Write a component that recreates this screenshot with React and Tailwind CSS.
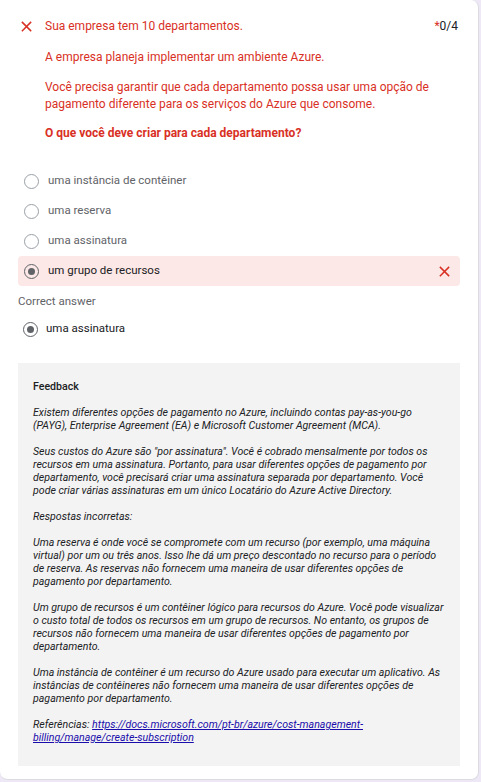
import React from "react";

function XIcon({ className = "" }) {
  return (
    <svg viewBox="0 0 12 12" className={className} fill="none" stroke="currentColor" strokeWidth="1.6" strokeLinecap="square">
      <path d="M1.5 1.5 L10.5 10.5 M10.5 1.5 L1.5 10.5" />
    </svg>
  );
}

function Radio({ checked, dark }) {
  return (
    <span
      className={
        "flex h-[15px] w-[15px] shrink-0 items-center justify-center rounded-full border-[1.5px] " +
        (checked || dark ? "border-[#5f6368]" : "border-[#9aa0a6]")
      }
    >
      {checked && <span className="h-[7px] w-[7px] rounded-full bg-[#5f6368]" />}
    </span>
  );
}

export default function App() {
  const options = [
    { label: "uma instância de contêiner" },
    { label: "uma reserva" },
    { label: "uma assinatura" },
    { label: "um grupo de recursos", selected: true },
  ];
  return (
    <div
      className="min-h-[782px] bg-[#ede7f6] text-[11.5px]"
      style={{ fontFamily: "Roboto, 'Liberation Sans', sans-serif" }}
    >
      <div className="h-[780px] w-[479px] rounded-b-lg rounded-tr-lg border-r border-b border-[#dadce0] bg-white pl-[18px] pr-[18px] pt-[18px]">
        {/* Question */}
        <div className="flex">
          <div className="w-[27px] shrink-0 pl-[3px] pt-[3px]">
            <XIcon className="h-[11px] w-[11px] text-[#d93025]" />
          </div>
          <div className="flex-1 text-[12px] leading-[17px] text-[#d93025]">
            <div className="flex justify-between">
              <p>Sua empresa tem 10 departamentos.</p>
              <span className="pr-[2px] text-[#202124]">
                <span className="text-[#d93025]">*</span>0/4
              </span>
            </div>
            <p className="mt-[14px]">A empresa planeja implementar um ambiente Azure.</p>
            <p className="mt-[13px] pr-[20px]">
              Você precisa garantir que cada departamento possa usar uma opção de pagamento diferente para os serviços do Azure que consome.
            </p>
            <p className="mt-[12px] font-bold">O que você deve criar para cada departamento?</p>
          </div>
        </div>

        {/* Options */}
        <div className="mt-[24px] w-[442px]">
          {options.map((o) => (
            <div
              key={o.label}
              className={
                "flex h-[30px] items-center rounded-[4px] pl-[6px] pr-[10px] " +
                (o.selected ? "bg-[#fce8e6]" : "")
              }
            >
              <Radio checked={o.selected} />
              <span className={"ml-[9px] flex-1 " + (o.selected ? "text-[#202124]" : "text-[#5f6368]")}>{o.label}</span>
              {o.selected && <XIcon className="h-[11px] w-[11px] text-[#d93025]" />}
            </div>
          ))}
        </div>

        <div className="mt-[8px] leading-[15px] text-[#5f6368]">Correct answer</div>
        <div className="mt-[5px] flex h-[30px] items-center pl-[5px]">
          <Radio checked />
          <span className="ml-[8px] text-[#202124]">uma assinatura</span>
        </div>

        {/* Feedback */}
        <div className="mt-[19px] h-[403px] w-[442px] bg-[#f3f3f3] pl-[15px] pr-[14px] pt-[17px] text-[10.6px] leading-[13px] text-[#202124]">
          <div className="font-medium">Feedback</div>
          <div className="mt-[13px] italic">
            <p>
              Existem diferentes opções de pagamento no Azure, incluindo contas pay-as-you-go (PAYG), Enterprise Agreement (EA) e Microsoft Customer Agreement (MCA).
            </p>
            <p className="mt-[13px]">
              Seus custos do Azure são "por assinatura". Você é cobrado mensalmente por todos os recursos em uma assinatura. Portanto, para usar diferentes opções de pagamento por departamento, você precisará criar uma assinatura separada por departamento. Você pode criar várias assinaturas em um único Locatário do Azure Active Directory.
            </p>
            <p className="mt-[13px]">Respostas incorretas:</p>
            <p className="mt-[13px]">
              Uma reserva é onde você se compromete com um recurso (por exemplo, uma máquina virtual) por um ou três anos. Isso lhe dá um preço descontado no recurso para o período de reserva. As reservas não fornecem uma maneira de usar diferentes opções de pagamento por departamento.
            </p>
            <p className="mt-[13px]">
              Um grupo de recursos é um contêiner lógico para recursos do Azure. Você pode visualizar o custo total de todos os recursos em um grupo de recursos. No entanto, os grupos de recursos não fornecem uma maneira de usar diferentes opções de pagamento por departamento.
            </p>
            <p className="mt-[13px]">
              Uma instância de contêiner é um recurso do Azure usado para executar um aplicativo. As instâncias de contêineres não fornecem uma maneira de usar diferentes opções de pagamento por departamento.
            </p>
            <p className="mt-[13px]">
              Referências:{" "}
              <a className="text-[#1a0dab] underline" href="#">
                https://docs.microsoft.com/pt-br/azure/cost-management-billing/manage/create-subscription
              </a>
            </p>
          </div>
        </div>
      </div>
    </div>
  );
}
